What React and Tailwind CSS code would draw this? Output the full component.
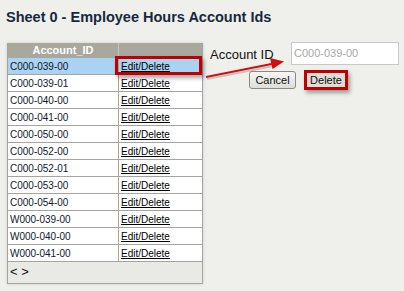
import React from 'react';

const ids = [
    'C000-039-00',
    'C000-039-01',
    'C000-040-00',
    'C000-041-00',
    'C000-050-00',
    'C000-052-00',
    'C000-052-01',
    'C000-053-00',
    'C000-054-00',
    'W000-039-00',
    'W000-040-00',
    'W000-041-00',
];

const App = () => {
    return (
        <div className="relative w-[404px] h-[291px] overflow-hidden bg-[#efefeb] font-['Liberation_Sans',Arial,sans-serif]">
            <h1 className="pt-[9px] pl-[6px] text-[14.5px] leading-[17px] font-bold text-[#17283d]">
                Sheet 0 - Employee Hours Account Ids
            </h1>

            <div className="flex items-start mt-[17px] pl-[7px]">
                {/* table */}
                <div className="w-[196px] border-x border-b border-[#a4a4a0] shadow-[0_0_3px_rgba(0,0,0,0.15)]">
                    <div className="flex h-[15px] bg-[#a8a89f]">
                        <div className="w-[110px] text-center text-white font-bold text-[11px] leading-[15px]">
                            Account_ID
                        </div>
                        <div className="flex-1 border-l border-[#c4c4bc]"></div>
                    </div>
                    {ids.map((id, i) => (
                        <div
                            key={id}
                            className={
                                'flex h-[17px] border-b border-[#a4a4a0] text-[10px] leading-[18px] ' +
                                (i === 0 ? 'bg-[#a9d3f0]' : 'bg-white')
                            }
                        >
                            <div className="w-[110px] pl-[2px] text-[#10182a]">{id}</div>
                            <div className="flex-1 border-l border-[#a4a4a0] pl-[2px]">
                                <span className="underline text-black">Edit/Delete</span>
                            </div>
                        </div>
                    ))}
                    <div className="h-[21px] bg-[#e9e9e5] pl-[2px] text-[13px] leading-[19px] text-[#111]">
                        &lt; &gt;
                    </div>
                </div>

                {/* edit panel */}
                <div className="ml-[7px] -mt-[1px]">
                    <div className="flex items-center">
                        <label className="w-[81px] pt-[2px] text-[13px] text-[#111]">Account ID</label>
                        <div className="w-[108px] h-[23px] border border-[#c8c8c4] bg-white pl-[2px] text-[11px] leading-[21px] text-[#a8a8a8]">
                            C000-039-00
                        </div>
                    </div>
                    <div className="flex items-center gap-[8px] ml-[39px] mt-[5px]">
                        <button className="w-[47px] h-[18px] rounded-[3px] border border-[#8a8a8a] bg-gradient-to-b from-[#f6f6f4] to-[#deded9] text-[11px] leading-[16px] text-[#111]">
                            Cancel
                        </button>
                        <div className="w-[44px] h-[20px] border-[3px] border-[#c00000] bg-[#deded9] shadow-[2px_3px_4px_rgba(0,0,0,0.35)] text-center text-[11px] leading-[14px] text-[#111]">
                            Delete
                        </div>
                    </div>
                </div>
            </div>

            {/* annotation: highlight box */}
            <div className="absolute left-[115px] top-[56px] w-[87px] h-[19px] border-[3px] border-[#c00000] shadow-[2px_3px_4px_rgba(0,0,0,0.35)]"></div>

            {/* annotation: arrow */}
            <svg className="absolute left-0 top-0" width="404" height="291" viewBox="0 0 404 291">
                <line x1="206" y1="77" x2="275" y2="63.5" stroke="rgba(0,0,0,0.18)" strokeWidth="2" transform="translate(1 2)" />
                <line x1="206" y1="77" x2="274" y2="63.5" stroke="#d01010" strokeWidth="2" />
                <polygon points="284,61.5 270,58 272.5,69" fill="#d01010" />
            </svg>
        </div>
    );
};

export default App;
